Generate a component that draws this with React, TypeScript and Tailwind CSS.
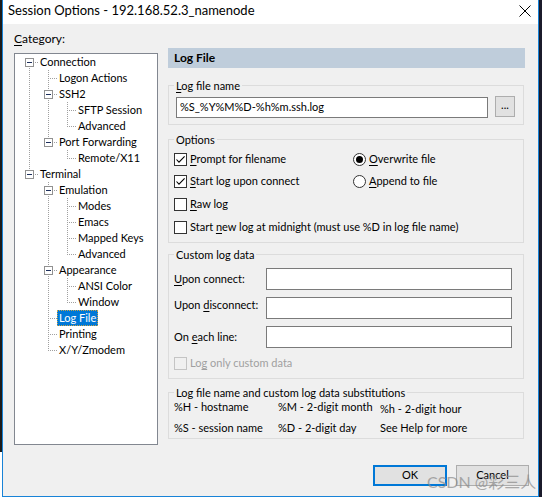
import React from 'react';

type Item = { t: string; l: number; exp?: boolean; sel?: boolean };

const items: Item[] = [
  { t: 'Connection', l: 0, exp: true },
  { t: 'Logon Actions', l: 1 },
  { t: 'SSH2', l: 1, exp: true },
  { t: 'SFTP Session', l: 2 },
  { t: 'Advanced', l: 2 },
  { t: 'Port Forwarding', l: 1, exp: true },
  { t: 'Remote/X11', l: 2 },
  { t: 'Terminal', l: 0, exp: true },
  { t: 'Emulation', l: 1, exp: true },
  { t: 'Modes', l: 2 },
  { t: 'Emacs', l: 2 },
  { t: 'Mapped Keys', l: 2 },
  { t: 'Advanced', l: 2 },
  { t: 'Appearance', l: 1, exp: true },
  { t: 'ANSI Color', l: 2 },
  { t: 'Window', l: 2 },
  { t: 'Log File', l: 1, sel: true },
  { t: 'Printing', l: 1 },
  { t: 'X/Y/Zmodem', l: 1 },
];

function hasNext(j: number): boolean {
  const lvl = items[j].l;
  for (let k = j + 1; k < items.length; k++) {
    if (items[k].l < lvl) return false;
    if (items[k].l === lvl) return true;
  }
  return false;
}

function info(idx: number) {
  const it = items[idx];
  const anc: boolean[] = [];
  for (let lv = 0; lv < it.l; lv++) {
    let a = idx - 1;
    while (a >= 0 && items[a].l !== lv) a--;
    anc.push(a >= 0 ? hasNext(a) : false);
  }
  return { anc, next: hasNext(idx), first: idx === 0 };
}

const LINE = '#a0a0a0';

function TreeRow({ idx }: { idx: number }) {
  const it = items[idx];
  const inf = info(idx);
  const w = 19 * (it.l + 1);
  const x0 = 19 * it.l;
  return (
    <div className="flex h-[16px] items-center">
      <svg width={w} height={16} className="shrink-0">
        {inf.anc.map((a, i) =>
          a ? (
            <line key={i} x1={19 * i + 10.5} y1={0} x2={19 * i + 10.5} y2={16} stroke={LINE} strokeDasharray="1 1" />
          ) : null
        )}
        <line
          x1={x0 + 10.5}
          y1={inf.first ? 8 : 0}
          x2={x0 + 10.5}
          y2={inf.next ? 16 : 9}
          stroke={LINE}
          strokeDasharray="1 1"
        />
        <line x1={x0 + 10} y1={8.5} x2={x0 + 19} y2={8.5} stroke={LINE} strokeDasharray="1 1" />
        {it.exp && (
          <g>
            <rect x={x0 + 6.5} y={4.5} width={8} height={8} fill="#ffffff" stroke="#919191" />
            <line x1={x0 + 8} y1={8.5} x2={x0 + 13} y2={8.5} stroke="#1c2f5c" />
          </g>
        )}
      </svg>
      <span
        className={
          it.sel
            ? 'h-[16px] border border-dotted border-[#c9a44a] bg-[#0078d7] px-[1px] leading-[14px] whitespace-nowrap text-white'
            : 'h-[16px] border border-transparent px-[1px] leading-[14px] whitespace-nowrap'
        }
      >
        {it.t}
      </span>
    </div>
  );
}

function U({ children }: { children: React.ReactNode }) {
  return <span className="underline decoration-1 underline-offset-[2px]">{children}</span>;
}

function Check({ checked, disabled }: { checked?: boolean; disabled?: boolean }) {
  return (
    <span
      className={
        disabled
          ? 'flex h-[13px] w-[13px] shrink-0 items-center justify-center border border-[#c4c4c4] bg-[#f0f0f0]'
          : 'flex h-[13px] w-[13px] shrink-0 items-center justify-center border border-[#333333] bg-white'
      }
    >
      {checked && (
        <svg width="11" height="11" viewBox="0 0 11 11">
          <path d="M1.5 5.5 L4 8.2 L9.6 2.4" stroke="#000" strokeWidth="1.1" fill="none" />
        </svg>
      )}
    </span>
  );
}

function Radio({ checked }: { checked?: boolean }) {
  return (
    <span className="flex h-[13px] w-[13px] shrink-0 items-center justify-center rounded-full border border-[#333333] bg-white">
      {checked && <span className="h-[7px] w-[7px] rounded-full bg-black" />}
    </span>
  );
}

function Box({ w }: { w: string }) {
  return <div className={`${w} h-[22px] shrink-0 border border-[#7a7a7a] bg-white`} />;
}

export default function App() {
  return (
    <div className="relative flex h-[499px] w-[542px] bg-white font-['Lato','Noto_Sans_CJK_SC',sans-serif] text-[11px] text-black">
      <div className="h-[452px] w-[2px] shrink-0 bg-[#1b1b1b]" />
      <div className="flex h-[497px] w-[537px] shrink-0 flex-col border-x border-b border-[#1883d7]">
        {/* title bar */}
        <div className="flex h-[24px] items-center justify-between bg-white pl-[5px] pr-[7px]">
          <span className="pb-[2px] text-[13px]">Session Options - 192.168.52.3_namenode</span>
          <svg width="12" height="12" viewBox="0 0 12 12" className="mb-[2px]">
            <path d="M0.5 0.5 L11.5 11.5 M11.5 0.5 L0.5 11.5" stroke="#000" strokeWidth="1" />
          </svg>
        </div>
        {/* client */}
        <div className="flex h-[472px] flex-col bg-[#f0f0f0]">
          <div className="flex h-[421px] items-start pl-[11px]">
            {/* left */}
            <div className="flex w-[144px] shrink-0 flex-col pt-[7px]">
              <div className="h-[15px] text-[12px] leading-[15px]">
                <U>C</U>ategory:
              </div>
              <div className="mt-[7px] h-[392px] border border-[#828790] bg-white pl-[4px]">
                {items.map((_, i) => (
                  <TreeRow key={i} idx={i} />
                ))}
              </div>
            </div>
            {/* right */}
            <div className="ml-[10px] flex w-[357px] shrink-0 flex-col pt-[24px]">
              <div className="flex h-[20px] items-center bg-[#bfcddb] pl-[6px] text-[12px] font-bold">Log File</div>

              <fieldset className="mt-[10px] w-[356px] min-w-0 border border-[#dcdcdc]">
                <legend className="ml-[5px] px-[2px] leading-[15px]">
                  <U>L</U>og file name
                </legend>
                <div className="flex items-start gap-[7px] pb-[6px] pl-[7px] pt-[4px]">
                  <div className="flex h-[21px] w-[312px] items-center border border-[#7a7a7a] bg-white pl-[3px]">
                    %S_%Y%M%D-%h%m.ssh.log
                  </div>
                  <div className="-mt-[1px] flex h-[21px] w-[20px] items-center justify-center border border-[#adadad] bg-[#e1e1e1] pb-[3px]">
                    ...
                  </div>
                </div>
              </fieldset>

              <fieldset className="mt-[7px] w-[356px] min-w-0 border border-[#dcdcdc]">
                <legend className="ml-[5px] px-[2px] leading-[15px]">Options</legend>
                <div className="flex flex-col pb-[4px] pl-[5px]">
                  <div className="flex h-[23px] items-center pt-[1px]">
                    <div className="flex w-[179px] items-center gap-[3px]">
                      <Check checked />
                      <span>
                        <U>P</U>rompt for filename
                      </span>
                    </div>
                    <div className="flex items-center gap-[3px]">
                      <Radio checked />
                      <span>
                        <U>O</U>verwrite file
                      </span>
                    </div>
                  </div>
                  <div className="flex h-[22px] items-center">
                    <div className="flex w-[179px] items-center gap-[3px]">
                      <Check checked />
                      <span>
                        <U>S</U>tart log upon connect
                      </span>
                    </div>
                    <div className="flex items-center gap-[3px]">
                      <Radio />
                      <span>
                        <U>A</U>ppend to file
                      </span>
                    </div>
                  </div>
                  <div className="flex h-[23px] items-center gap-[3px] pt-[1px]">
                    <Check />
                    <span>
                      <U>R</U>aw log
                    </span>
                  </div>
                  <div className="flex h-[23px] items-center gap-[3px] pt-[1px]">
                    <Check />
                    <span>
                      Start <U>n</U>ew log at midnight (must use %D in log file name)
                    </span>
                  </div>
                </div>
              </fieldset>

              <fieldset className="mt-[4px] w-[356px] min-w-0 border border-[#dcdcdc]">
                <legend className="ml-[5px] px-[2px] leading-[15px]">Custom log data</legend>
                <div className="flex flex-col pb-[4px] pl-[5px] pt-[6px]">
                  <div className="flex items-center">
                    <span className="w-[92px] shrink-0">
                      <U>U</U>pon connect:
                    </span>
                    <Box w="w-[246px]" />
                  </div>
                  <div className="mt-[7px] flex items-center">
                    <span className="-mt-[5px] w-[92px] shrink-0">
                      Upon <U>d</U>isconnect:
                    </span>
                    <Box w="w-[246px]" />
                  </div>
                  <div className="mt-[7px] flex items-center">
                    <span className="w-[92px] shrink-0">
                      On <U>e</U>ach line:
                    </span>
                    <Box w="w-[246px]" />
                  </div>
                  <div className="mt-[4px] flex h-[22px] items-center gap-[3px] text-[#a0a0a0]">
                    <Check disabled />
                    <span>
                      Lo<U>g</U> only custom data
                    </span>
                  </div>
                </div>
              </fieldset>

              <fieldset className="mt-[6px] w-[356px] min-w-0 border border-[#dcdcdc]">
                <legend className="ml-[5px] px-[2px] leading-[15px]">
                  Log file name and custom log data substitutions
                </legend>
                <div className="-mt-[1px] flex flex-col pb-[3px] pl-[5px] whitespace-nowrap">
                  <div className="flex h-[21px] items-start leading-[15px]">
                    <span className="w-[104px] shrink-0">%H - hostname</span>
                    <span className="w-[102px] shrink-0">%M - 2-digit month</span>
                    <span className="mt-[2px]">%h - 2-digit hour</span>
                  </div>
                  <div className="flex h-[15px] items-start leading-[15px]">
                    <span className="w-[104px] shrink-0">%S - session name</span>
                    <span className="w-[102px] shrink-0">%D - 2-digit day</span>
                    <span>See Help for more</span>
                  </div>
                </div>
              </fieldset>
            </div>
          </div>
          {/* buttons */}
          <div className="mt-[20px] flex justify-end gap-[9px] pr-[9px]">
            <div className="flex h-[21px] w-[74px] items-center justify-center border-2 border-[#0078d7] bg-[#e1e1e1]">
              OK
            </div>
            <div className="flex h-[21px] w-[73px] items-center justify-center border border-[#adadad] bg-[#e1e1e1]">
              Cancel
            </div>
          </div>
        </div>
      </div>
      <div className="h-[497px] w-[3px] shrink-0 bg-[#1b1b2b]" />
      <div className="absolute left-[427px] top-[470px] text-[16px] text-[#8a8a8a] opacity-70">CSDN @彩三人</div>
    </div>
  );
}
